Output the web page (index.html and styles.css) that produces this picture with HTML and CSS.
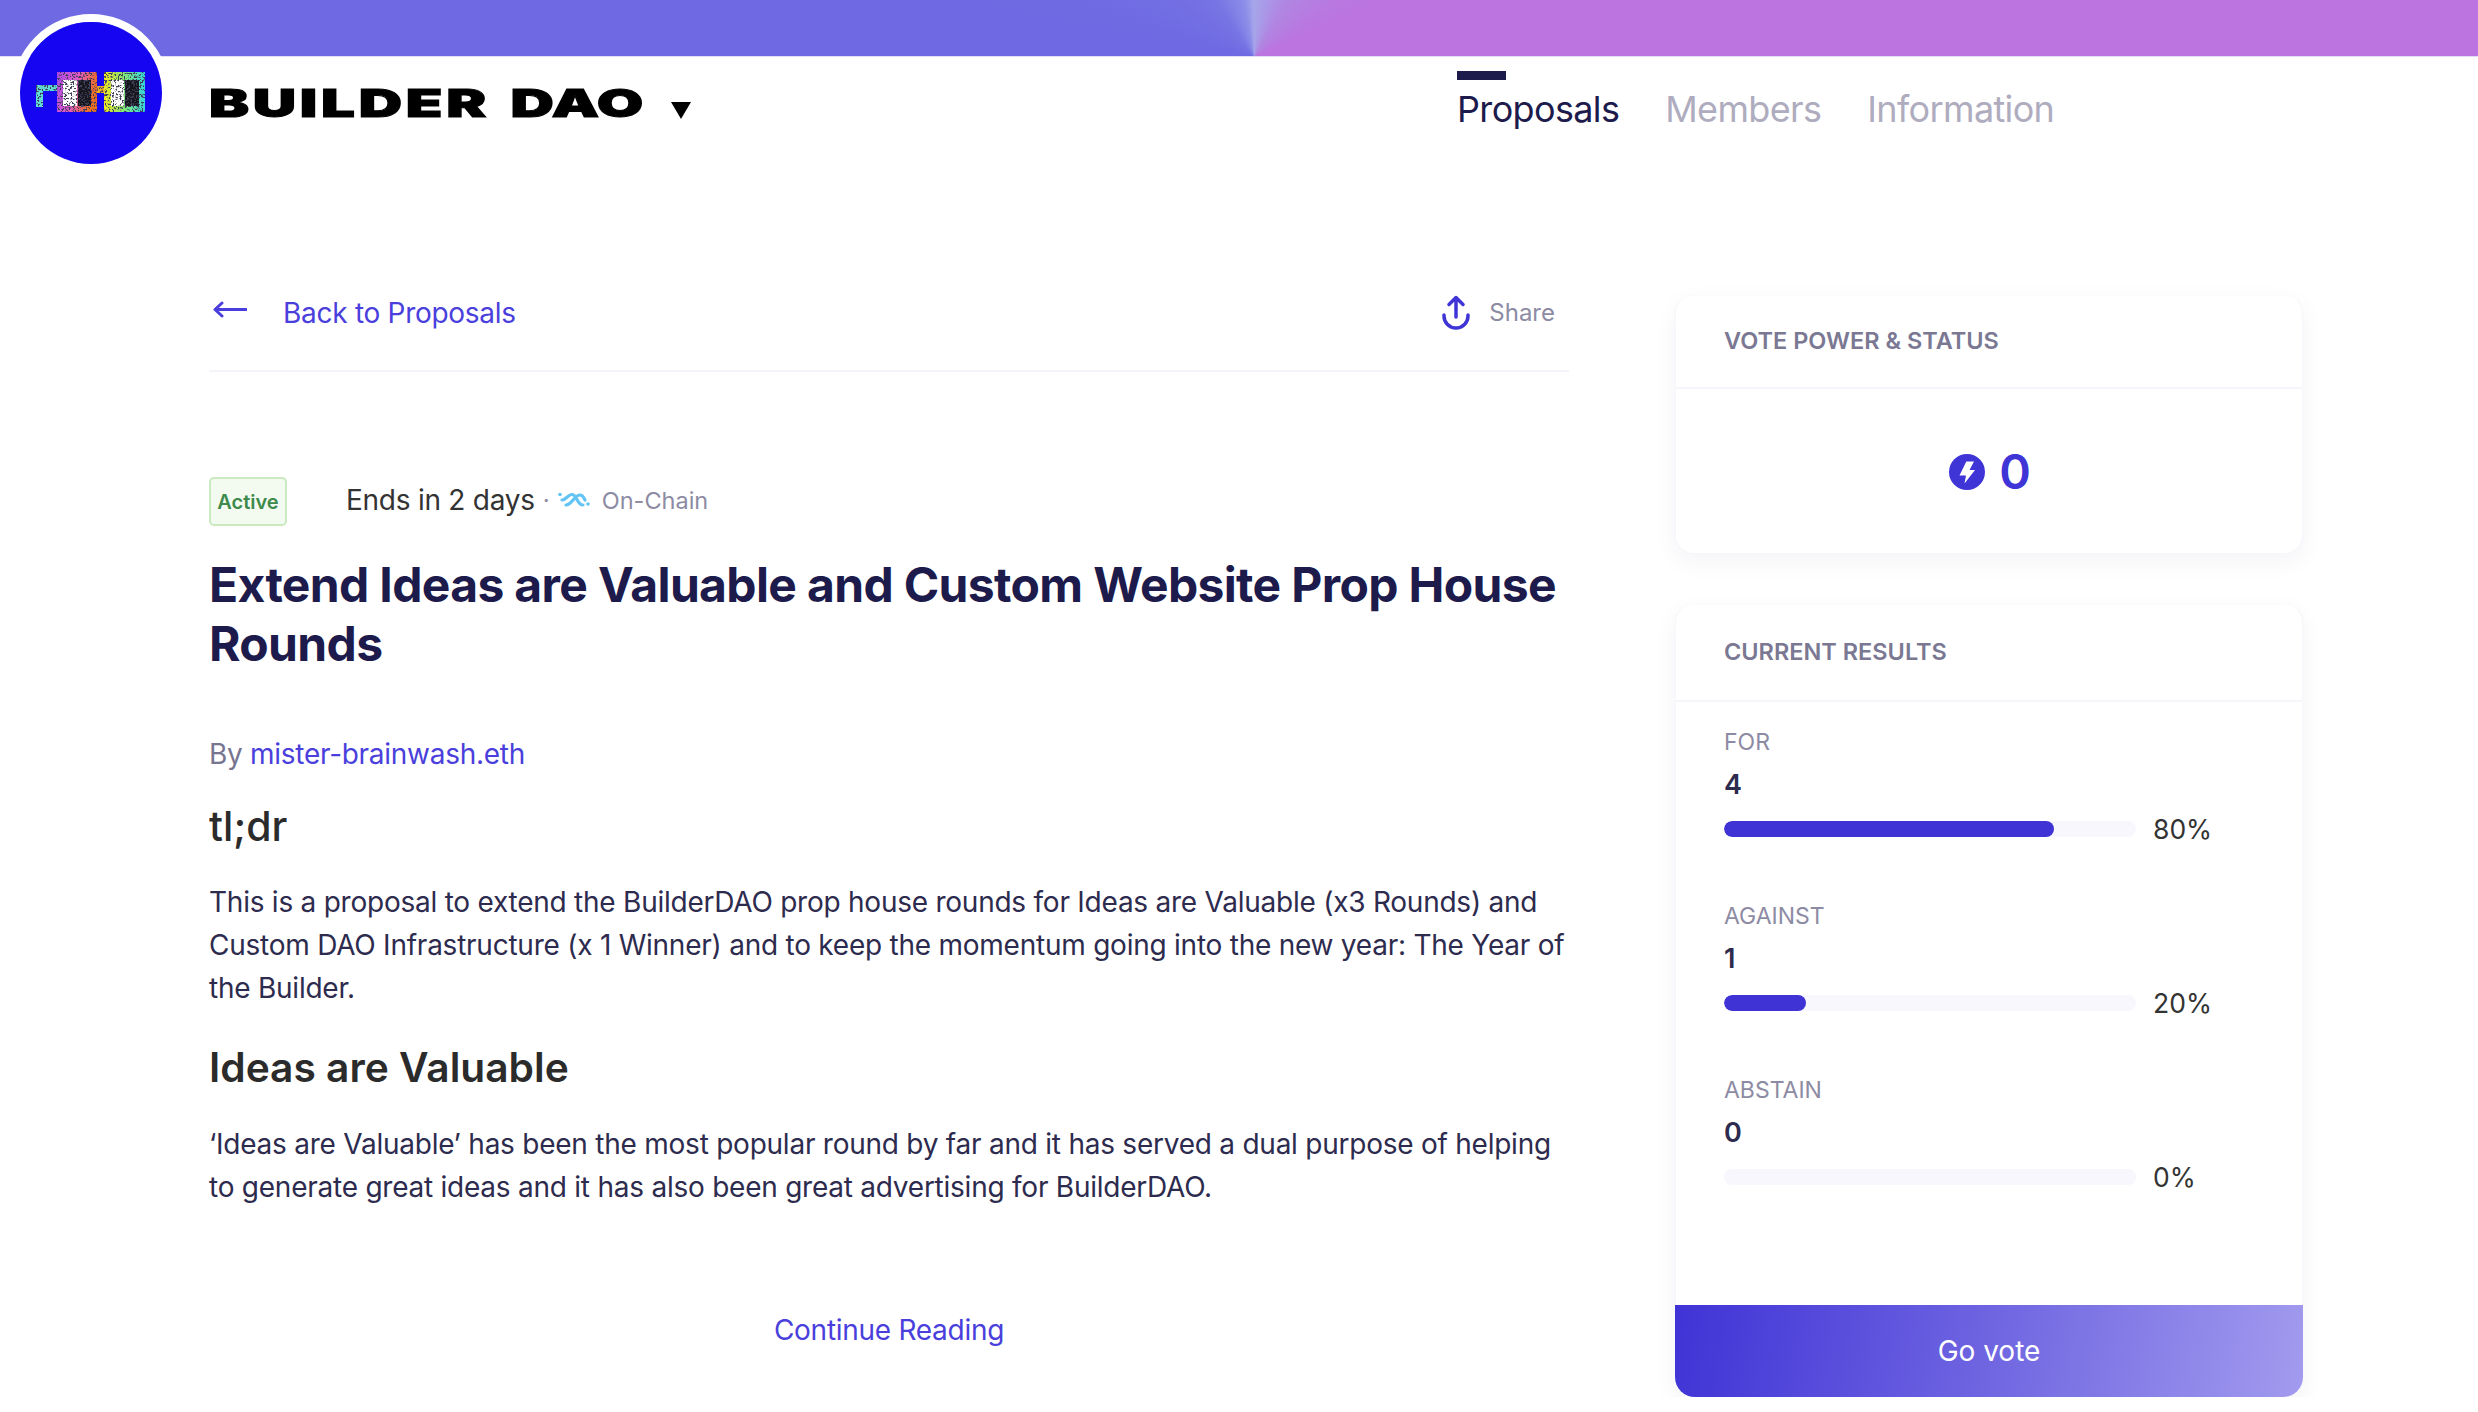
FILE: index.html
```html
<!DOCTYPE html>
<html lang="en">
<head>
    <meta charset="UTF-8">
    <title>Builder DAO - Proposal</title>
    <link rel="stylesheet" href="styles.css">
</head>
<body>
    <div class="banner"></div>
    <!-- logo sits over the banner -->
    <div class="logo">
        <svg width="142" height="142" viewBox="0 0 142 142">
            <defs>
                <linearGradient id="g1" x1="0" y1="0" x2="1" y2="0.3">
                    <stop offset="0" stop-color="#a94be8"/>
                    <stop offset="0.5" stop-color="#e05ad0"/>
                    <stop offset="1" stop-color="#f0701c"/>
                </linearGradient>
                <linearGradient id="g2" x1="0" y1="0" x2="1" y2="0">
                    <stop offset="0" stop-color="#f4e81e"/>
                    <stop offset="0.5" stop-color="#7fe87a"/>
                    <stop offset="1" stop-color="#35d6e0"/>
                </linearGradient>
                <filter id="speck" x="0" y="0" width="100%" height="100%">
                    <feTurbulence type="fractalNoise" baseFrequency="0.55" numOctaves="2" seed="4" result="n"/>
                    <feColorMatrix in="n" type="matrix" values="0 0 0 0 0.05  0 0 0 0 0.05  0 0 0 0 0.1  0 0 0 9 -4.6" result="dots"/>
                    <feComposite in="dots" in2="SourceAlpha" operator="in" result="clip"/>
                    <feMerge>
                        <feMergeNode in="SourceGraphic"/>
                        <feMergeNode in="clip"/>
                    </feMerge>
                    <feGaussianBlur stdDeviation="0.35"/>
                </filter>
            </defs>
            <circle cx="71" cy="71" r="71" fill="#1505f0"/>
            <g filter="url(#speck)">
                <path d="M16 63h21v6h-14v16h-7z" fill="#62dcd8"/>
                <rect x="37" y="50" width="40" height="40" fill="url(#g1)"/>
                <rect x="43" y="58" width="14" height="26" fill="#fff"/>
                <rect x="58" y="58" width="13" height="26" fill="#15131c"/>
                <rect x="77" y="64" width="8" height="7" fill="#eeb01a"/>
                <rect x="84" y="50" width="41" height="40" fill="url(#g2)"/>
                <rect x="91" y="58" width="13" height="26" fill="#fff"/>
                <rect x="105" y="58" width="14" height="26" fill="#15131c"/>
            </g>
        </svg>
    </div>

    <div class="header">
        <div class="brand">
            <span class="brand-name">BUILDER <span class="brand-dao">DAO</span></span>
            <span class="brand-caret"></span>
        </div>
        <div class="nav">
            <a class="nav-item on">Proposals</a>
            <a class="nav-item">Members</a>
            <a class="nav-item">Information</a>
        </div>
    </div>

    <div class="content">
        <div class="proposal">
            <div class="topbar">
                <a class="back">
                    <svg class="back-arrow" width="36" height="20" viewBox="0 0 36 20">
                        <path d="M35 9.500H5M11 3L4 9.500L11 16" fill="none" stroke="#4a3fdc" stroke-width="3" stroke-linecap="round" stroke-linejoin="round"/>
                    </svg>
                    Back to Proposals
                </a>
                <a class="share">
                    <svg width="30" height="36" viewBox="0 0 30 36">
                        <path d="M15 22V3M8 9.500L15 2.500L22 9.500M3 20v1a12 12 0 0 0 24 0v-1" fill="none" stroke="#3f35d6" stroke-width="3.500" stroke-linecap="round" stroke-linejoin="round"/>
                    </svg>
                    Share
                </a>
            </div>

            <div class="status">
                <span class="badge">Active</span>
                <span class="ends">Ends in 2 days</span>
                <span class="dot">·</span>
                <svg class="chain-icon" width="32" height="16" viewBox="0 0 32 16">
                    <path d="M4 8C8 8 10 2.500 14 2.500C19 2.500 19 13 25 13M8 13C14 13 16 3 22 3C25 3 26 6 27 8" fill="none" stroke="#62c4f4" stroke-width="3.200" stroke-linecap="round"/>
                    <circle cx="2" cy="2.500" r="1.800" fill="#62c4f4"/>
                    <circle cx="30" cy="12" r="1.800" fill="#62c4f4"/>
                </svg>
                <span class="chain">On-Chain</span>
            </div>

            <h1>Extend Ideas are Valuable and Custom Website Prop House Rounds</h1>
            <div class="author">By <a>mister-brainwash.eth</a></div>

            <h2 class="tldr">tl;dr</h2>
            <p>This is a proposal to extend the BuilderDAO prop house rounds for Ideas are Valuable (x3 Rounds) and Custom DAO Infrastructure (x 1 Winner) and to keep the momentum going into the new year: The Year of the Builder.</p>
            <h2>Ideas are Valuable</h2>
            <p>‘Ideas are Valuable’ has been the most popular round by far and it has served a dual purpose of helping to generate great ideas and it has also been great advertising for BuilderDAO.</p>

            <a class="more">Continue Reading</a>
        </div>

        <div class="side">
            <div class="card card-power">
                <div class="card-title">VOTE POWER &amp; STATUS</div>
                <div class="power">
                    <svg width="36" height="36" viewBox="0 0 36 36">
                        <circle cx="18" cy="18" r="18" fill="#3f35d6"/>
                        <path d="M17.300 7.500H25L20.500 16H26L15.500 29.500L17 21.500H10.500Z" fill="#fff"/>
                    </svg>
                    <span>0</span>
                </div>
            </div>

            <div class="card card-results">
                <div class="card-title">CURRENT RESULTS</div>
                <div class="results">
                    <div class="result">
                        <div class="result-label">FOR</div>
                        <div class="result-num">4</div>
                        <div class="result-row">
                            <div class="bar"><div class="bar-fill" style="width:80%"></div></div>
                            <span class="pct">80%</span>
                        </div>
                    </div>
                    <div class="result">
                        <div class="result-label">AGAINST</div>
                        <div class="result-num">1</div>
                        <div class="result-row">
                            <div class="bar"><div class="bar-fill" style="width:20%"></div></div>
                            <span class="pct">20%</span>
                        </div>
                    </div>
                    <div class="result">
                        <div class="result-label">ABSTAIN</div>
                        <div class="result-num">0</div>
                        <div class="result-row">
                            <div class="bar"></div>
                            <span class="pct">0%</span>
                        </div>
                    </div>
                </div>
                <a class="vote-btn">Go vote</a>
            </div>
        </div>
    </div>
</body>
</html>
```

FILE: styles.css
```css
*{
    margin: 0px;
    padding: 0px;
    box-sizing: border-box;
}
body{
    background-color: #fff;
    font-family: Inter, "Liberation Sans", sans-serif;
    color: #2d2b4e;
    overflow: hidden;
}
a{
    text-decoration: none;
}

/* top */
.banner{
    height: 57px;
    border-bottom: 1px solid #e4dcf6;
    background: conic-gradient(from 0deg at 1254px 57px, #a6a6ea 0deg, #b086e2 30deg, #bb74e0 65deg, #ba72e0 180deg, #6c68e2 180deg, #6f6ae2 285deg, #7774e4 325deg, #8c8ee8 350deg, #a6a6ea 360deg);
}
.logo{
    position: absolute;
    left: 12px;
    top: 14px;
    width: 158px;
    height: 158px;
    border-radius: 50%;
    border: 8px solid #fff;
}
.logo svg{
    display: block;
}
.header{
    height: 238px;
    padding: 14px 0px 0px 209px;
    display: grid;
    grid-template-columns: 1248px auto;
}
.brand{
    display: flex;
    align-items: flex-start;
}
.brand-name{
    display: block;
    width: 431px;
    margin-top: 9px;
    font-size: 38px;
    line-height: 46px;
    font-weight: 900;
    letter-spacing: 2.350px;
    word-spacing: 3px;
    color: #000;
    white-space: nowrap;
    transform: scaleX(1.58);
    transform-origin: left center;
    -webkit-text-stroke: 1px #000;
}
.brand-dao{
    letter-spacing: 0.3px;
}
.brand-caret{
    width: 0px;
    height: 0px;
    margin: 31px 0px 0px 31px;
    border-left: 10px solid transparent;
    border-right: 10px solid transparent;
    border-top: 17px solid #000;
}
.nav{
    display: flex;
    gap: 46px;
}
.nav-item{
    display: block;
    padding-top: 15.500px;
    font-size: 36px;
    line-height: 44px;
    letter-spacing: -0.65px;
    color: #aeacbe;
    position: relative;
}
.nav-item.on{
    color: #1d1b4c;
}
.nav-item.on::before{
    content: "";
    position: absolute;
    left: 0px;
    top: 0px;
    width: 49px;
    height: 9px;
    background-color: #1d1b4c;
}

/* main */
.content{
    padding-left: 209px;
    display: grid;
    grid-template-columns: 1360px 628px;
    column-gap: 106px;
    align-items: start;
}
.topbar{
    height: 77px;
    border-bottom: 2px solid #f4f3fa;
    display: flex;
    justify-content: space-between;
    align-items: flex-start;
}
.back{
    display: flex;
    align-items: center;
    font-size: 28px;
    line-height: 36px;
    letter-spacing: -0.28px;
    color: #4a3fdc;
}
.back-arrow{
    margin: -6px 36px 0px 2px;
}
.share{
    display: flex;
    align-items: center;
    gap: 18px;
    margin-right: 14px;
    font-size: 24px;
    line-height: 36px;
    color: #8d8ba3;
}
.status{
    display: flex;
    align-items: center;
    height: 49px;
    margin-top: 105px;
    font-size: 28px;
}
.badge{
    width: 78px;
    height: 49px;
    display: flex;
    align-items: center;
    justify-content: center;
    border: 2px solid #c9e9bf;
    border-radius: 5px;
    background-color: #f3fbf0;
    color: #3d8a4c;
    font-size: 20px;
    font-weight: 600;
    margin-right: 59px;
}
.ends{
    margin-top: -3px;
    letter-spacing: -0.25px;
    color: #333;
}
.dot{
    margin: -3px 8px 0px 8px;
    color: #8d8ba3;
    font-size: 24px;
}
.chain-icon{
    margin-top: -3px;
}
.chain{
    margin: -3px 0px 0px 12px;
    color: #8d8ba3;
    font-size: 23.500px;
}
h1{
    margin-top: 30px;
    font-size: 48px;
    line-height: 58.500px;
    font-weight: 700;
    letter-spacing: -0.65px;
    color: #1d1b4c;
}
.author{
    margin-top: 63px;
    font-size: 28px;
    line-height: 36px;
    letter-spacing: -0.28px;
    color: #77758f;
}
.author a{
    color: #4a3fdc;
}
h2{
    margin-top: 33px;
    font-size: 40.700px;
    line-height: 50px;
    font-weight: 600;
    color: #2b2b2b;
}
h2.tldr{
    margin-top: 29px;
    font-size: 41px;
    font-weight: 500;
}
p{
    margin-top: 30px;
    font-size: 28px;
    line-height: 43px;
    letter-spacing: -0.24px;
}
.more{
    display: block;
    margin-top: 103px;
    text-align: center;
    font-size: 28px;
    line-height: 36px;
    letter-spacing: -0.28px;
    color: #4a3fdc;
}

/* side cards */
.side{
    display: flex;
    flex-direction: column;
    gap: 50px;
}
.card{
    background-color: #fff;
    border: 1px solid #f6f6fb;
    border-top-color: #fbfbfd;
    border-radius: 18px;
    box-shadow: 0px 8px 24px rgba(40,40,90,0.05);
}
.card-title{
    padding: 30px 48px 0px;
    font-size: 23.500px;
    line-height: 30px;
    font-weight: 600;
    color: #7a7892;
    border-bottom: 2px solid #f5f5fa;
}
.card-power{
    height: 259px;
}
.card-power .card-title{
    height: 93px;
}
.power{
    height: 165px;
    display: flex;
    align-items: center;
    justify-content: center;
    gap: 14px;
    padding-left: 2px;
    font-size: 48px;
    font-weight: 600;
    color: #3f35d6;
}
.card-results{
    height: 793px;
    display: flex;
    flex-direction: column;
}
.card-results .card-title{
    height: 97px;
    padding-top: 32px;
}
.results{
    padding: 25px 48px 0px;
    display: flex;
    flex-direction: column;
    gap: 54px;
}
.result-label{
    font-size: 23px;
    line-height: 30px;
    color: #8d8ba3;
}
.result-num{
    margin-top: 10px;
    font-size: 27px;
    line-height: 36px;
    font-weight: 600;
    color: #2d2b4e;
}
.result-row{
    margin-top: 8px;
    display: flex;
    align-items: center;
    gap: 17px;
}
.bar{
    width: 412px;
    height: 16px;
    border-radius: 8px;
    background-color: #f8f7fd;
    overflow: hidden;
}
.bar-fill{
    height: 100%;
    border-radius: 8px;
    background-color: #3f33d6;
}
.pct{
    font-size: 26.500px;
    line-height: 36px;
    color: #333;
}
.vote-btn{
    display: flex;
    align-items: center;
    justify-content: center;
    height: 92px;
    margin: auto -1px -1px;
    border-radius: 0px 0px 20px 20px;
    background: linear-gradient(100deg, #3f33d6 0%, #6a60e0 45%, #a29bee 100%);
    color: #fff;
    font-size: 28px;
}
```
